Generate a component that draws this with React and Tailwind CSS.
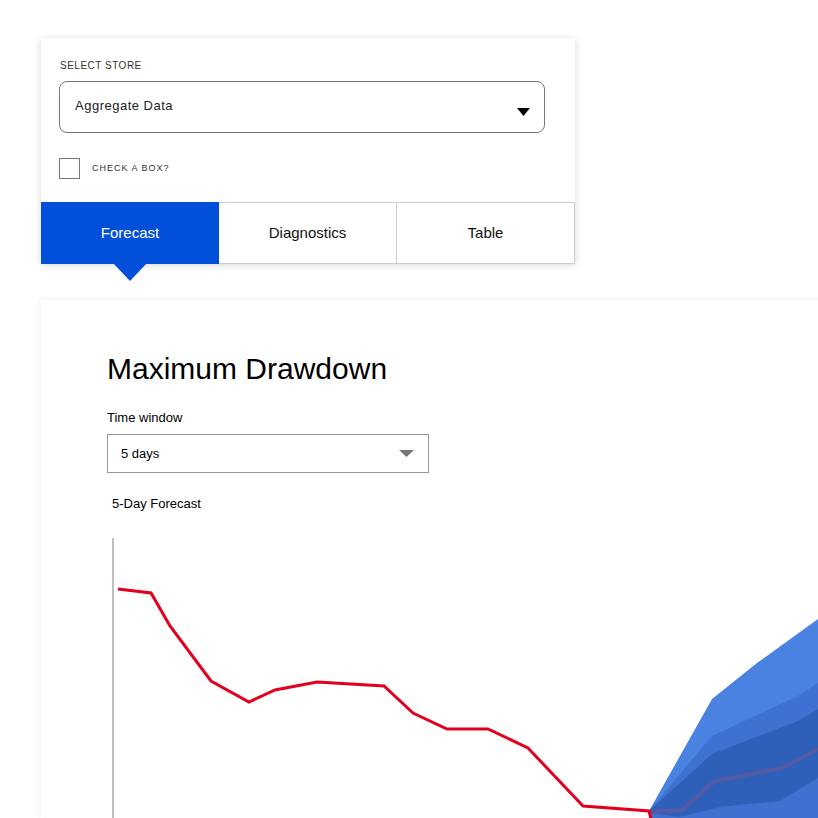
import React, { useState } from 'react';

const redPoints = [
  [118, 588], [151, 592], [170, 625], [211, 680], [249, 701], [275, 689],
  [317, 681], [384, 685], [413, 712], [447, 728], [488, 728], [528, 747],
  [583, 805], [649, 810], [652, 822],
];

const toPts = (arr) => arr.map(([x, y]) => `${x},${y}`).join(' ');

const tabs = ['Forecast', 'Diagnostics', 'Table'];

const App = () => {
  const [active, setActive] = useState('Forecast');
  const [checked, setChecked] = useState(false);

  return (
    <div className="w-[818px] h-[818px] overflow-hidden bg-white pt-[38px] pl-[41px] font-['Liberation_Sans',Arial,sans-serif]">
      {/* store picker card */}
      <div className="w-[534px] bg-white shadow-[0_1px_7px_rgba(0,0,0,0.16)]">
        <div className="pl-[18px] pr-[30px] pt-[22px]">
          <div className="text-[10px] leading-[12px] tracking-[0.5px] text-[#333] uppercase pl-[1px]">Select Store</div>
          <button className="mt-[9px] w-[486px] h-[52px] rounded-[8px] border border-[#777] flex items-center justify-between pl-[15px] pr-[14px] text-left">
            <span className="text-[13px] tracking-[0.5px] text-[#222] -mt-[3px]">Aggregate Data</span>
            <svg width="13" height="8" viewBox="0 0 13 8" className="mt-[9px]">
              <polygon points="0,0 13,0 6.5,8" fill="#000" />
            </svg>
          </button>
          <label className="mt-[25px] flex items-center gap-[12px] cursor-pointer">
            <span
              onClick={() => setChecked((c) => !c)}
              className="w-[21px] h-[21px] border border-[#777] bg-white flex items-center justify-center text-[12px]"
            >
              {checked ? '✓' : ''}
            </span>
            <span className="text-[9px] tracking-[1px] text-[#333] uppercase">Check a box?</span>
          </label>
        </div>
        <div className="mt-[23px] flex">
          {tabs.map((t) => (
            <button
              key={t}
              onClick={() => setActive(t)}
              className={`relative w-[178px] h-[62px] text-[15px] ${active === t ? 'bg-[#0250d9] text-white' : 'bg-white text-[#111] border-t border-b border-r border-[#ccc]'}`}
            >
              {t}
              {active === t && (
                <svg width="34" height="18" viewBox="0 0 34 18" className="absolute left-[72px] top-[61px]">
                  <polygon points="0,0 34,0 17,18" fill="#0250d9" />
                </svg>
              )}
            </button>
          ))}
        </div>
      </div>

      {/* chart card */}
      <div className="mt-[36px] w-[800px] bg-white shadow-[0_0_6px_rgba(0,0,0,0.08)]">
        <div className="pl-[66px] pt-[52px]">
          <h1 className="text-[30px] leading-[34px] text-black">Maximum Drawdown</h1>
          <div className="mt-[24px] text-[13px] leading-[16px] text-black">Time window</div>
          <button className="mt-[8px] w-[322px] h-[39px] border-[1.5px] border-[#999] flex items-center justify-between pl-[13px] pr-[14px]">
            <span className="text-[13px] text-black">5 days</span>
            <svg width="15" height="7" viewBox="0 0 15 7">
              <polygon points="0,0 15,0 7.5,7" fill="#777" />
            </svg>
          </button>
          <div className="mt-[23px] ml-[5px] text-[13px] leading-[16px] text-black">5-Day Forecast</div>
        </div>
        <svg width="777" height="307" viewBox="41 511 777 307" className="block">
          <line x1="113" y1="537" x2="113" y2="830" stroke="#aaa" strokeWidth="1.5" />
          <polygon points="649,810 712,698 757,662 818,618 818,830 649,830" fill="#4a82e1" />
          <polygon points="649,810 712,735 798,695 818,682 818,830 649,830" fill="#3e71d1" />
          <polygon points="649,810 712,753 798,720 818,708 818,777 780,800 720,806 680,816 649,812" fill="#2f60b9" />
          <polyline points="649,811 682,809 715,780 782,767 818,748" fill="none" stroke="#5a5ba0" strokeWidth="4" opacity="0.85" />
          <polyline points={toPts(redPoints)} fill="none" stroke="#e2001f" strokeWidth="3" strokeLinejoin="miter" />
        </svg>
      </div>
    </div>
  );
};

export default App;
